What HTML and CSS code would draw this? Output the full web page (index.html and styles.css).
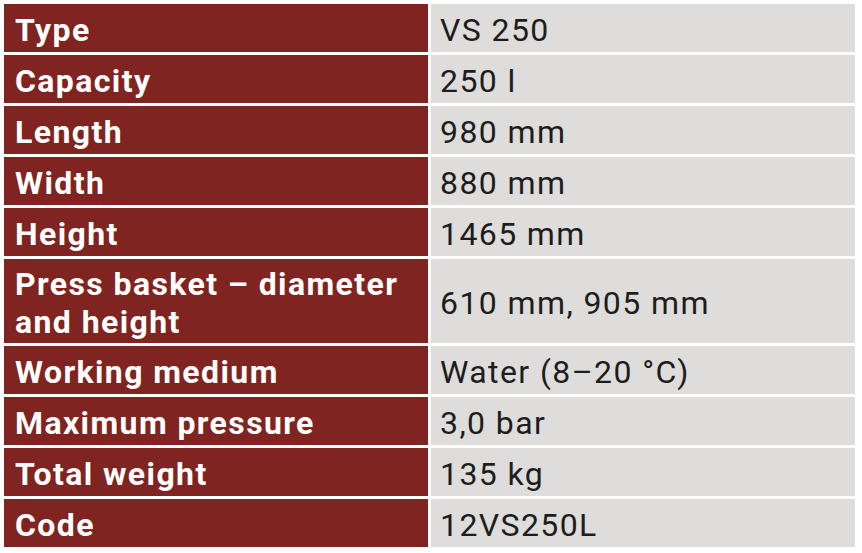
FILE: index.html
```html
<!DOCTYPE html>
<html lang="en">
<head>
<meta charset="utf-8">
<title>VS 250</title>
<link rel="stylesheet" href="styles.css">
</head>
<body>
<div class="specs">
  <div class="label"><span>Type</span></div><div class="value"><span>VS 250</span></div>
  <div class="label"><span>Capacity</span></div><div class="value"><span>250 l</span></div>
  <div class="label"><span>Length</span></div><div class="value"><span>980 mm</span></div>
  <div class="label"><span>Width</span></div><div class="value"><span>880 mm</span></div>
  <div class="label"><span>Height</span></div><div class="value"><span>1465 mm</span></div>
  <div class="label"><span>Press basket – diameter<br>and height</span></div><div class="value"><span>610 mm, 905 mm</span></div>
  <div class="label"><span>Working medium</span></div><div class="value"><span>Water (8–20 °C)</span></div>
  <div class="label"><span>Maximum pressure</span></div><div class="value"><span>3,0 bar</span></div>
  <div class="label"><span>Total weight</span></div><div class="value"><span>135 kg</span></div>
  <div class="label"><span>Code</span></div><div class="value"><span>12VS250L</span></div>
</div>
</body>
</html>
```
FILE: styles.css
```css
html, body {
  margin: 0;
  padding: 0;
  background: #ffffff;
}

.specs {
  display: grid;
  grid-template-columns: 424px 424px;
  grid-template-rows: repeat(5, 48px) 84px repeat(4, 48px);
  gap: 3px;
  padding: 4px 0 0 4px;
  font-family: Roboto, "Liberation Sans", sans-serif;
  font-size: 32px;
  line-height: 38px;
  letter-spacing: 1.4px;
}

.label,
.value {
  display: flex;
  align-items: center;
  padding: 4px 8px 0 11px;
  box-sizing: border-box;
}

.label {
  background: #7f2420;
  color: #ffffff;
  font-weight: 700;
}

.value {
  background: #dedddb;
  color: #1d1d1d;
  font-weight: 400;
  padding-left: 9px;
}
```
